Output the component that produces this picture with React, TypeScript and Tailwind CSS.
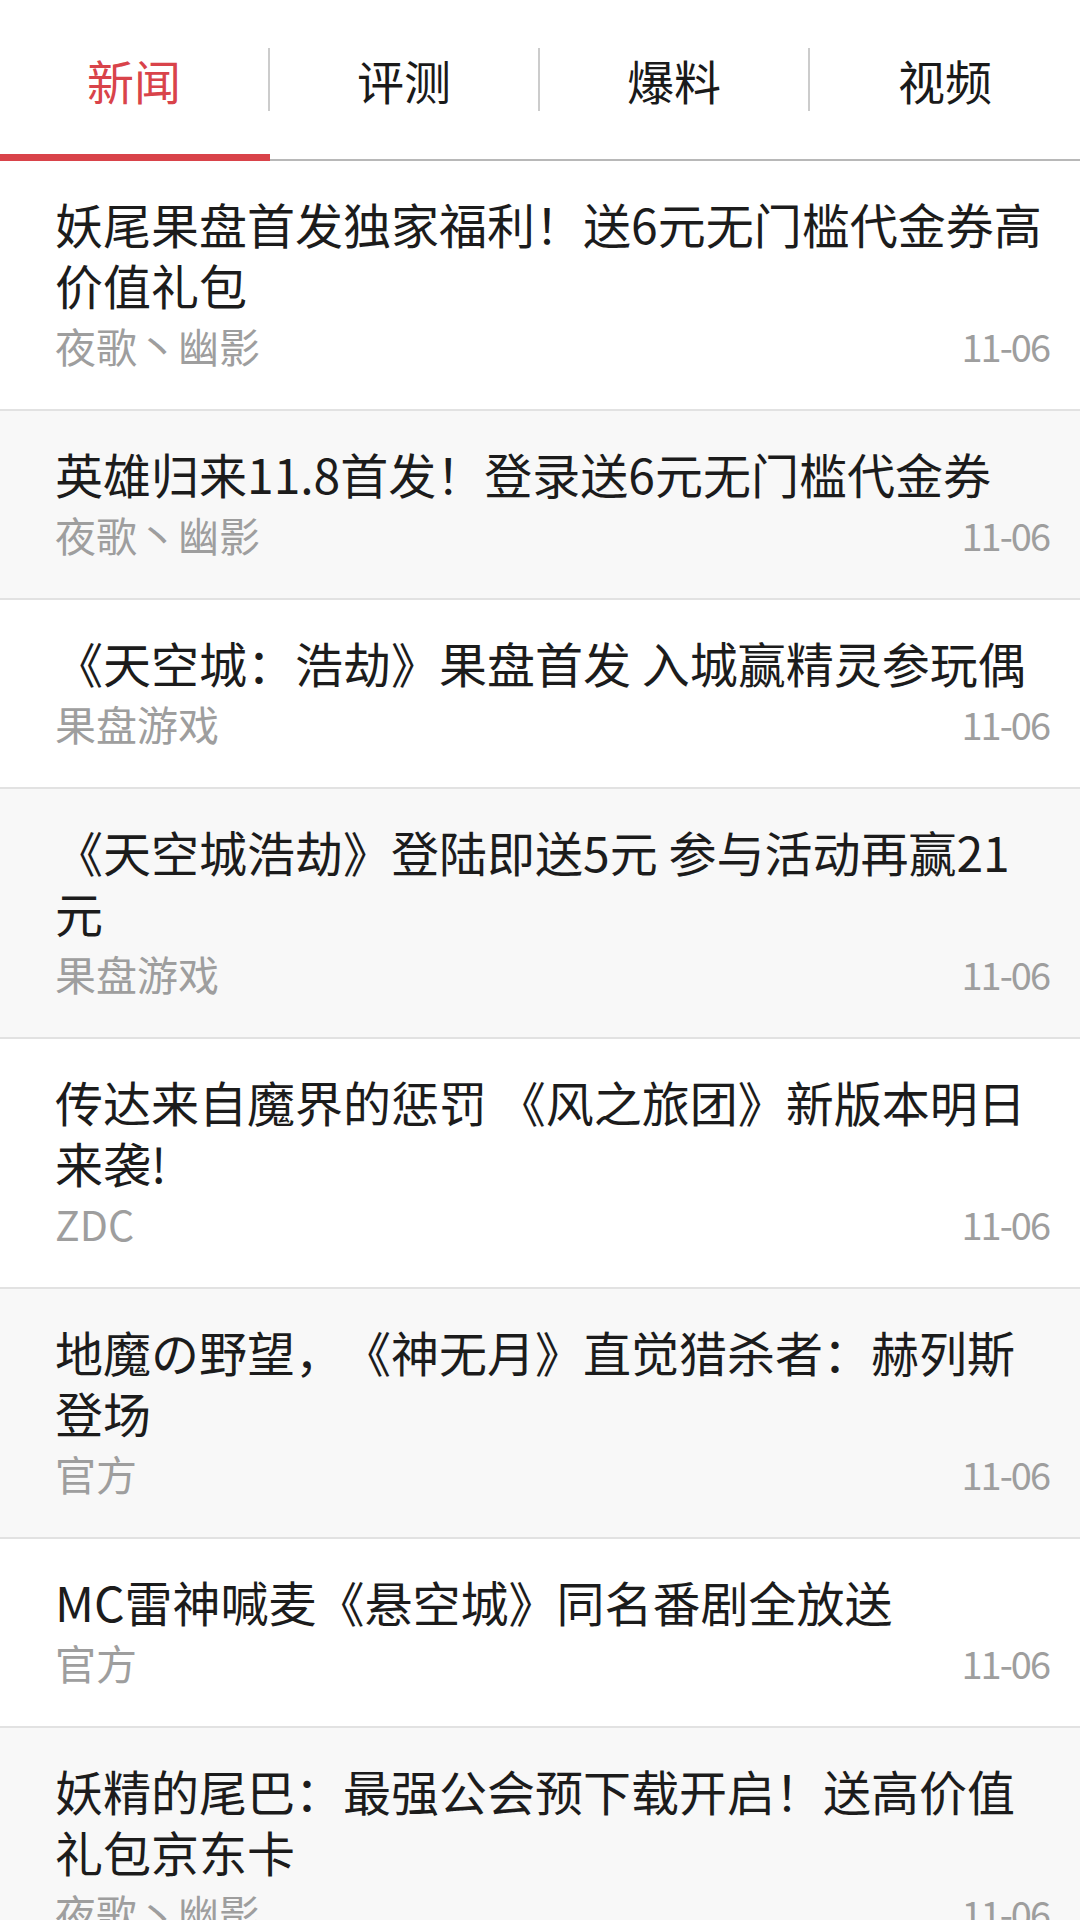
import React from 'react';

type NewsItem = {
  title: string;
  author: string;
  date: string;
};

const tabs = ['新闻', '评测', '爆料', '视频'];

const news: NewsItem[] = [
  { title: '妖尾果盘首发独家福利！送6元无门槛代金券高价值礼包', author: '夜歌丶幽影', date: '11-06' },
  { title: '英雄归来11.8首发！登录送6元无门槛代金券', author: '夜歌丶幽影', date: '11-06' },
  { title: '《天空城：浩劫》果盘首发 入城赢精灵参玩偶', author: '果盘游戏', date: '11-06' },
  { title: '《天空城浩劫》登陆即送5元 参与活动再赢21元', author: '果盘游戏', date: '11-06' },
  { title: '传达来自魔界的惩罚 《风之旅团》新版本明日来袭!', author: 'ZDC', date: '11-06' },
  { title: '地魔の野望，《神无月》直觉猎杀者：赫列斯登场', author: '官方', date: '11-06' },
  { title: 'MC雷神喊麦《悬空城》同名番剧全放送', author: '官方', date: '11-06' },
  { title: '妖精的尾巴：最强公会预下载开启！送高价值礼包京东卡', author: '夜歌丶幽影', date: '11-06' },
];

export default function App() {
  return (
    <div className="w-[1080px] h-[1920px] overflow-hidden bg-white font-['Noto_Sans_CJK_SC','Noto_Sans',sans-serif]">
      {/* Tabs */}
      <div className="flex h-[161px] border-b-2 border-[#b8b8b8]">
        {tabs.map((tab, i) => (
          <div key={tab} className="relative flex-1 flex items-center">
            <div className="flex-1 text-center text-[47px] leading-none">
              <span className={i === 0 ? 'text-[#d9434a]' : 'text-[#1a1a1a]'}>{tab}</span>
            </div>
            {i < tabs.length - 1 && <div className="w-[2px] h-[63px] bg-[#cccccc]" />}
            {i === 0 && <div className="absolute left-0 right-0 bottom-[-2px] h-[7px] bg-[#d9434a]" />}
          </div>
        ))}
      </div>

      {/* News list */}
      <div>
        {news.map((item, i) => (
          <div
            key={i}
            className={
              'pl-[55px] pr-[31px] pt-[32px] pb-[33px] border-b-2 border-[#e2e2e2] ' +
              (i % 2 === 1 ? 'bg-[#f8f8f8]' : 'bg-white')
            }
          >
            <div className="pr-[6px] text-[48px] leading-[61px] text-[#1c1c1c] [text-spacing-trim:space-all]">
              {item.title}
            </div>
            <div className="flex items-center justify-between h-[61px] text-[#9e9e9e]">
              <span className="text-[41px]">{item.author}</span>
              <span className="text-[38px] tracking-[-2px]">{item.date}</span>
            </div>
          </div>
        ))}
      </div>
    </div>
  );
}
